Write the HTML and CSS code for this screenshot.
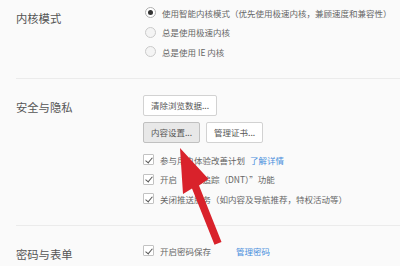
FILE: index.html
```html
<!DOCTYPE html>
<html lang="zh-CN">
<head>
<meta charset="utf-8">
<link rel="stylesheet" href="styles.css">
</head>
<body>
<div class="page">
  <section class="section sec-kernel">
    <div class="label">内核模式</div>
    <div class="controls">
      <div class="row"><span class="radio checked"></span><span>使用智能内核模式（优先使用极速内核，兼顾速度和兼容性）</span></div>
      <div class="row"><span class="radio"></span><span>总是使用极速内核</span></div>
      <div class="row"><span class="radio"></span><span>总是使用 IE 内核</span></div>
    </div>
  </section>
  <section class="section sec-privacy">
    <div class="label">安全与隐私</div>
    <div class="controls">
      <div class="btn-row"><span class="btn">清除浏览数据...</span></div>
      <div class="btn-row"><span class="btn pressed">内容设置...</span><span class="btn">管理证书...</span></div>
      <div class="checks">
        <div class="row"><span class="check"></span><span>参与用户体验改善计划</span><a class="link">了解详情</a></div>
        <div class="row"><span class="check"></span><span>开启“请勿追踪（DNT）”功能</span></div>
        <div class="row"><span class="check"></span><span>关闭推送服务（如内容及导航推荐，特权活动等）</span></div>
      </div>
    </div>
  </section>
  <section class="section sec-password">
    <div class="label">密码与表单</div>
    <div class="controls">
      <div class="row"><span class="check"></span><span>开启密码保存</span><a class="link wide">管理密码</a></div>
    </div>
  </section>
  <svg class="arrow" width="400" height="266" viewBox="0 0 400 266">
    <polygon points="180,148 183,194 192,188.5 214.5,244.8 221.5,242 199,185.5 208.5,179" fill="#d9222b"/>
  </svg>
</div>
</body>
</html>
```
FILE: styles.css
```css
html, body {
  margin: 0;
  padding: 0;
  background: #fafafa;
}
body {
  font-family: "Noto Sans CJK SC", "Noto Sans", sans-serif;
  color: #555;
  width: 400px;
  height: 266px;
  overflow: hidden;
}
.page {
  position: relative;
  width: 400px;
  height: 266px;
}
.section {
  display: grid;
  grid-template-columns: 127px 1fr;
  margin-left: 16px;
  border-bottom: 1px solid #ebebeb;
}
.label {
  font-size: 11.3px;
  line-height: 20px;
  color: #555;
  white-space: nowrap;
}
.controls {
  font-size: 8.5px;
  display: flex;
  flex-direction: column;
}
.row {
  display: flex;
  align-items: center;
  height: 19.5px;
  white-space: nowrap;
  color: #666;
}
.radio {
  box-sizing: border-box;
  width: 11px;
  height: 11px;
  border: 1px solid #cacaca;
  border-radius: 50%;
  background: #f4f4f4;
  margin: 0 6px 0 2px;
  display: flex;
  align-items: center;
  justify-content: center;
  flex: none;
}
.radio.checked {
  background: #fff;
  border-color: #b0b0b0;
}
.radio.checked::after {
  content: "";
  width: 5px;
  height: 5px;
  border-radius: 50%;
  background: #333;
}
.check {
  box-sizing: border-box;
  width: 11px;
  height: 11px;
  border: 1px solid #c2c2c2;
  border-radius: 1px;
  background: #fff;
  margin-right: 6px;
  position: relative;
  flex: none;
}
.check::after {
  content: "";
  position: absolute;
  left: 3px;
  top: 0.5px;
  width: 3px;
  height: 6px;
  border-right: 1.3px solid #555;
  border-bottom: 1.3px solid #555;
  transform: rotate(40deg);
}
.link {
  color: #4a8fdc;
  margin-left: 5px;
}
.link.wide {
  margin-left: 25px;
}
.sec-kernel {
  height: 79px;
  box-sizing: border-box;
  padding-top: 3px;
}
.sec-kernel .label {
  padding-top: 5px;
}
.sec-privacy {
  height: 147px;
  box-sizing: border-box;
  padding-top: 16px;
}
.sec-privacy .label {
  padding-top: 2px;
}
.btn-row {
  display: flex;
  gap: 6px;
  margin-bottom: 6px;
}
.btn {
  box-sizing: border-box;
  height: 21px;
  line-height: 19px;
  padding: 0 7px;
  border: 1px solid #d2d2d2;
  border-radius: 2px;
  background: #fff;
  color: #555;
  white-space: nowrap;
}
.btn.pressed {
  background: #e8e8e8;
  border-color: #c0c0c0;
}
.checks {
  margin-top: 1px;
}
.sec-password {
  border-bottom: none;
  padding-top: 15px;
}
.sec-password .label {
  padding-top: 3px;
}
.arrow {
  position: absolute;
  left: 0;
  top: 0;
  pointer-events: none;
}
```
